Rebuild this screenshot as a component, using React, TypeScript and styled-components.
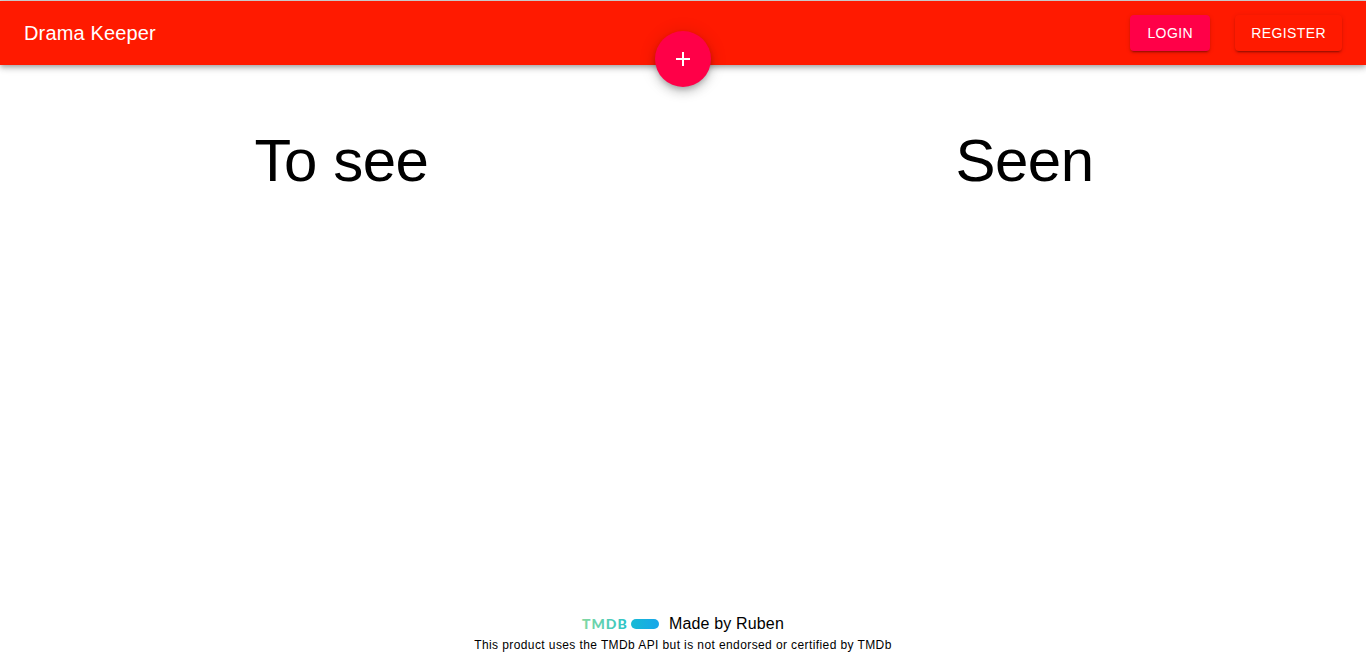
import React from "react";
import styled, { createGlobalStyle } from "styled-components";

const GlobalStyle = createGlobalStyle`
  *, *::before, *::after { box-sizing: border-box; }
  body {
    margin: 0;
    background: #fff;
    color: #000;
    font-family: "Liberation Sans", Arial, Helvetica, sans-serif;
    font-size: 16px;
    line-height: 24px;
    letter-spacing: 0.00938em;
  }
`;

const Page = styled.div`
  display: flex;
  flex-direction: column;
  min-height: 100vh;
  border-top: 1px solid #d5d5d5;
`;

const AppBar = styled.header`
  position: relative;
  display: flex;
  align-items: center;
  gap: 25px;
  min-height: 64px;
  padding: 0 24px;
  background: #ff1a00;
  color: #fff;
  box-shadow: 0 2px 4px -1px rgba(0, 0, 0, 0.2), 0 4px 5px 0 rgba(0, 0, 0, 0.14),
    0 1px 10px 0 rgba(0, 0, 0, 0.12);
`;

const Brand = styled.h1`
  flex: 1;
  margin: 0;
  font-size: 20px;
  font-weight: 400;
  line-height: 32px;
  letter-spacing: 0.0075em;
`;

const BarButton = styled.button<{ $accent?: boolean }>`
  min-width: 80px;
  padding: 6px 16px;
  border: 0;
  border-radius: 4px;
  background: ${(p) => (p.$accent ? "#ff0048" : "#ff1a00")};
  color: #fff;
  font-family: inherit;
  font-size: 14px;
  font-weight: 400;
  line-height: 24px;
  letter-spacing: 0.02857em;
  text-transform: uppercase;
  cursor: pointer;
  box-shadow: 0 3px 1px -2px rgba(0, 0, 0, 0.2), 0 2px 2px 0 rgba(0, 0, 0, 0.14),
    0 1px 5px 0 rgba(0, 0, 0, 0.12);
`;

const AddButton = styled.button`
  position: absolute;
  left: 0;
  right: 0;
  top: 30px;
  z-index: 1;
  display: flex;
  align-items: center;
  justify-content: center;
  width: 56px;
  height: 56px;
  margin: 0 auto;
  padding: 0;
  border: 0;
  border-radius: 50%;
  background: #ff0048;
  color: #fff;
  cursor: pointer;
  box-shadow: 0 3px 5px -1px rgba(0, 0, 0, 0.2), 0 6px 10px 0 rgba(0, 0, 0, 0.14),
    0 1px 18px 0 rgba(0, 0, 0, 0.12);
`;

const Columns = styled.main`
  flex: 1;
  display: grid;
  grid-template-columns: 1fr 1fr;
  padding-top: 60px;
`;

const Column = styled.section`
  text-align: center;
`;

const ColumnTitle = styled.h2`
  margin: 0;
  font-size: 60px;
  font-weight: 400;
  line-height: 72px;
  letter-spacing: -0.00833em;
`;

const Footer = styled.footer`
  display: flex;
  flex-direction: column;
  align-items: center;
  padding-bottom: 15px;
`;

const Credit = styled.div`
  display: flex;
  align-items: center;
  gap: 10px;
`;

const Logo = styled.svg`
  display: block;
  overflow: visible;
  font-family: Lato, sans-serif;
  font-size: 14px;
  font-weight: 900;
  letter-spacing: 1px;
`;

const Notice = styled.p`
  margin: 0;
  font-size: 12px;
  line-height: 18px;
  letter-spacing: 0.03333em;
`;

const TmdbLogo = () => (
  <Logo width="77" height="20" viewBox="0 0 77 20" role="img" aria-label="TMDB">
    <defs>
      <linearGradient id="tmdb" gradientUnits="userSpaceOnUse" x1="0" y1="0" x2="77" y2="0">
        <stop offset="0" stopColor="#84d8a2" />
        <stop offset="0.5" stopColor="#3cc8c0" />
        <stop offset="0.66" stopColor="#16b9d6" />
        <stop offset="1" stopColor="#18a6ea" />
      </linearGradient>
    </defs>
    <text x="0" y="15" fill="url(#tmdb)">TMDB</text>
    <rect x="49" y="5" width="28" height="10" rx="5" fill="url(#tmdb)" />
  </Logo>
);

export default function App() {
  return (
    <>
      <GlobalStyle />
      <Page>
        <AppBar>
          <Brand>Drama Keeper</Brand>
          <BarButton type="button" $accent>Login</BarButton>
          <BarButton type="button">Register</BarButton>
          <AddButton type="button" aria-label="Add">
            <svg width="24" height="24" viewBox="0 0 24 24" fill="currentColor" aria-hidden="true">
              <path d="M19 13h-6v6h-2v-6H5v-2h6V5h2v6h6v2z" />
            </svg>
          </AddButton>
        </AppBar>
        <Columns>
          <Column>
            <ColumnTitle>To see</ColumnTitle>
          </Column>
          <Column>
            <ColumnTitle>Seen</ColumnTitle>
          </Column>
        </Columns>
        <Footer>
          <Credit>
            <TmdbLogo />
            <span>Made by Ruben</span>
          </Credit>
          <Notice>This product uses the TMDb API but is not endorsed or certified by TMDb</Notice>
        </Footer>
      </Page>
    </>
  );
}
